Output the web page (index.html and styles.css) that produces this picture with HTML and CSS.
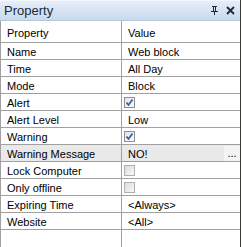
FILE: index.html
```html
<!DOCTYPE html>
<html>
<head>
<meta charset="utf-8">
<link rel="stylesheet" href="styles.css">
</head>
<body>
<div class="panel">
  <div class="titlebar">
    <span class="title">Property</span>
    <span class="tools">
      <svg class="pin" width="9" height="9" viewBox="0 0 9 9"><path d="M2 0h5v1H6v4h2v1H5v3H4V6H1V5h2V1H2z M4 1v4h1V1z" fill="#1e2a3a"/></svg>
      <svg class="close" width="9" height="9" viewBox="0 0 9 9"><path d="M1 1L8 8M8 1L1 8" stroke="#1e2a3a" stroke-width="1.8"/></svg>
    </span>
  </div>
  <div class="grid">
    <div class="row head"><div class="c k">Property</div><div class="c v">Value</div></div>
    <div class="row"><div class="c k">Name</div><div class="c v">Web block</div></div>
    <div class="row"><div class="c k">Time</div><div class="c v">All Day</div></div>
    <div class="row"><div class="c k">Mode</div><div class="c v">Block</div></div>
    <div class="row"><div class="c k">Alert</div><div class="c v cbcell"><span class="cb on"><svg width="9" height="9" viewBox="0 0 9 9"><path d="M1.5 4.5L3.5 7L7.5 1.5" stroke="#3a4fb0" stroke-width="1.6" fill="none"/></svg></span></div></div>
    <div class="row"><div class="c k">Alert Level</div><div class="c v">Low</div></div>
    <div class="row"><div class="c k">Warning</div><div class="c v cbcell"><span class="cb on"><svg width="9" height="9" viewBox="0 0 9 9"><path d="M1.5 4.5L3.5 7L7.5 1.5" stroke="#3a4fb0" stroke-width="1.6" fill="none"/></svg></span></div></div>
    <div class="row sel"><div class="c k">Warning Message</div><div class="c v"><span class="txt">NO!</span><span class="dots">...</span></div></div>
    <div class="row"><div class="c k">Lock Computer</div><div class="c v cbcell"><span class="cb"></span></div></div>
    <div class="row"><div class="c k">Only offline</div><div class="c v cbcell"><span class="cb"></span></div></div>
    <div class="row"><div class="c k">Expiring Time</div><div class="c v">&lt;Always&gt;</div></div>
    <div class="row"><div class="c k">Website</div><div class="c v">&lt;All&gt;</div></div>
    <div class="row empty"><div class="c k"></div><div class="c v"></div></div>
  </div>
</div>
</body>
</html>
```
FILE: styles.css
```css
html, body { margin: 0; padding: 0; background: #fff; }
body { width: 242px; height: 247px; overflow: hidden; font-family: "Liberation Sans", Arial, sans-serif; }
.panel { width: 241px; border-right: 1px solid #3a3a30; height: 247px; box-sizing: border-box; }
.titlebar {
  height: 21px; box-sizing: border-box;
  background: linear-gradient(#e6eef9, #c8d9ef);
  border-top: 1px solid #f4f8fc;
  display: flex; align-items: center; justify-content: space-between;
  padding: 0 5px 0 4px;
  border-bottom: 1px solid #b8c8dc;
}
.title { font-size: 13px; color: #222a33; }
.tools { display: flex; gap: 7px; align-items: center; }
.grid { border-left: 1px solid #a0a0a0; }
.row { display: flex; height: 17px; box-sizing: border-box; border-bottom: 1px solid #a0a0a0; font-size: 11px; color: #000; }
.row.head { height: 22px; }
.row.head .c { padding-top: 3px; }
.row.sel { background: #e9e9e9; }
.row.empty { height: 17px; border-bottom: none; }
.c { display: flex; align-items: center; box-sizing: border-box; padding-top: 1px; }
.k { width: 121px; padding-left: 6px; border-right: 1px solid #a0a0a0; }
.v { flex: 1; padding-left: 6px; }
.v.cbcell { padding-left: 2px; padding-top: 0; }
.txt { flex: 1; }
.dots { width: 16px; height: 100%; background: #f4f4f4; display: flex; align-items: center; justify-content: center; font-size: 11px; line-height: 1; padding-bottom: 1px; box-sizing: border-box; }
.cb {
  width: 11px; height: 11px; box-sizing: border-box;
  border: 1px solid #b0b0b0;
  background: linear-gradient(135deg, #dcdcdc, #f8f8f8);
  display: flex; align-items: center; justify-content: center;
}
.cb.on { border-color: #8e8f8f; background: linear-gradient(135deg, #e0e4ec, #fafbfd); }
```
